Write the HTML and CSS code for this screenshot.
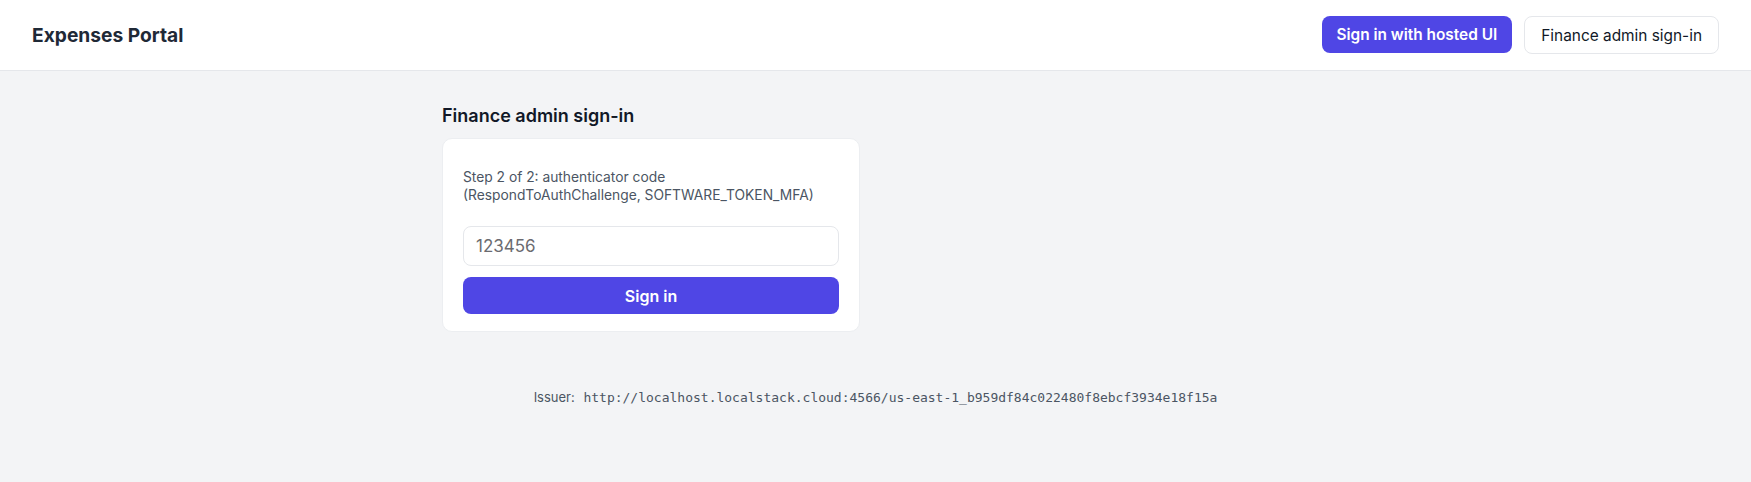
FILE: index.html
```html
<!DOCTYPE html>
<html lang="en">
<head>
    <meta charset="UTF-8">
    <meta name="viewport" content="width=device-width, initial-scale=1.0">
    <title>Expenses Portal</title>
    <link rel="stylesheet" href="styles.css">
</head>
<body>
    <header class="topbar">
        <div class="brand">Expenses Portal</div>
        <nav class="actions">
            <button class="btn btn-primary">Sign in with hosted UI</button>
            <button class="btn btn-outline">Finance admin sign-in</button>
        </nav>
    </header>

    <main class="page">
        <h2 class="section-title">Finance admin sign-in</h2>

        <div class="card">
            <p class="hint">Step 2 of 2: authenticator code<br>(RespondToAuthChallenge, SOFTWARE_TOKEN_MFA)</p>
            <form class="mfa-form" onsubmit="return false">
                <input class="field" type="text" inputmode="numeric" placeholder="123456">
                <button class="btn btn-primary btn-block" type="submit">Sign in</button>
            </form>
        </div>

        <p class="issuer">Issuer: <code>http://localhost.localstack.cloud:4566/us-east-1_b959df84c022480f8ebcf3934e18f15a</code></p>
    </main>
</body>
</html>
```

FILE: styles.css
```css
body {
    margin: 0;
    font-family: Inter, "Noto Sans", "Liberation Sans", sans-serif;
    background-color: #f3f4f6;
    color: #111827;
}
.topbar {
    display: flex;
    align-items: center;
    justify-content: space-between;
    height: 70px;
    padding: 0 32px;
    background: white;
    border-bottom: 1px solid #e5e7eb;
}
.brand {
    font-size: 19.2px;
    font-weight: 700;
    color: #1f2937;
}
.actions {
    display: flex;
    gap: 12px;
}
.btn {
    font-family: inherit;
    font-size: 15.4px;
    border-radius: 8px;
    cursor: pointer;
}
.btn-primary {
    height: 37px;
    padding: 0 15px;
    background: #4f46e5;
    color: white;
    border: none;
    font-weight: 600;
}
.btn-primary:hover {
    background: #4338ca;
}
.btn-outline {
    height: 38px;
    padding: 0 16px;
    background: white;
    color: #111827;
    border: 1px solid #e5e7eb;
}
.page {
    width: 867px;
    margin: 0 auto;
    padding-top: 33px;
}
.section-title {
    margin: 0 0 10px;
    font-size: 18px;
    line-height: 24px;
    font-weight: 600;
}
.card {
    width: 376px;
    padding: 20px 20px 17px;
    background: white;
    border: 1px solid #eceef1;
    border-radius: 10px;
}
.hint {
    margin: 9px 0 22px;
    font-size: 13.8px;
    line-height: 18px;
    color: #4b5563;
}
.mfa-form {
    display: flex;
    flex-direction: column;
    gap: 11px;
}
.field {
    box-sizing: border-box;
    height: 40px;
    padding: 0 12px;
    font-family: inherit;
    font-size: 17px;
    border: 1px solid #e5e7eb;
    border-radius: 8px;
    outline: none;
}
.field::placeholder {
    color: #6b6b70;
}
.btn-block {
    width: 100%;
    font-size: 16px;
}
.issuer {
    margin: 55px 0 0;
    text-align: center;
    font-size: 13px;
    line-height: 20px;
    color: #4b5563;
}
.issuer code {
    margin-left: 5px;
    font-family: "DejaVu Sans Mono", "Liberation Mono", monospace;
    font-size: 13px;
    color: #4b5563;
}
```
